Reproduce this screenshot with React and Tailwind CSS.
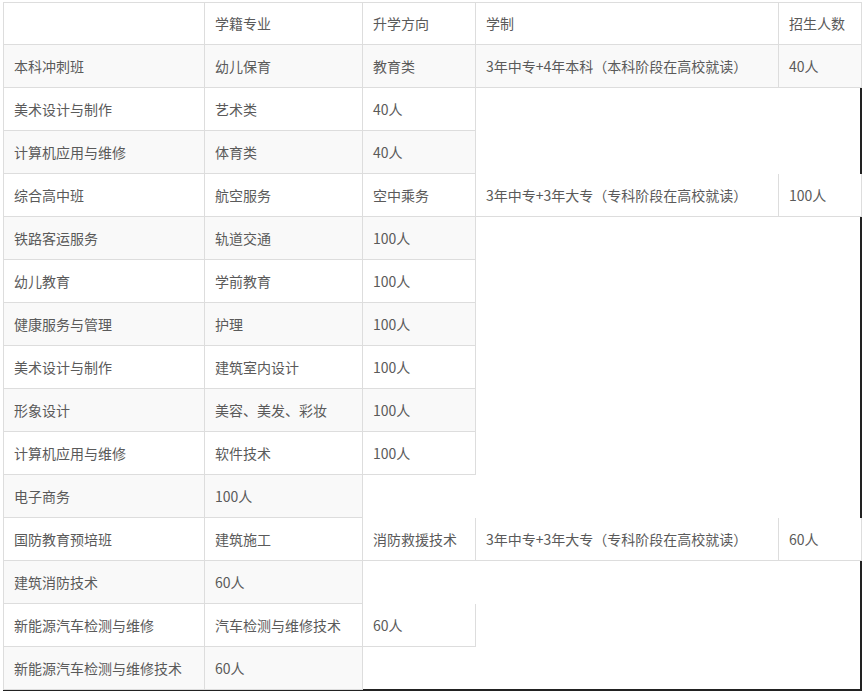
const rows = [
  ["", "学籍专业", "升学方向", "学制", "招生人数"],
  ["本科冲刺班", "幼儿保育", "教育类", "3年中专+4年本科（本科阶段在高校就读）", "40人"],
  ["美术设计与制作", "艺术类", "40人"],
  ["计算机应用与维修", "体育类", "40人"],
  ["综合高中班", "航空服务", "空中乘务", "3年中专+3年大专（专科阶段在高校就读）", "100人"],
  ["铁路客运服务", "轨道交通", "100人"],
  ["幼儿教育", "学前教育", "100人"],
  ["健康服务与管理", "护理", "100人"],
  ["美术设计与制作", "建筑室内设计", "100人"],
  ["形象设计", "美容、美发、彩妆", "100人"],
  ["计算机应用与维修", "软件技术", "100人"],
  ["电子商务", "100人"],
  ["国防教育预培班", "建筑施工", "消防救援技术", "3年中专+3年大专（专科阶段在高校就读）", "60人"],
  ["建筑消防技术", "60人"],
  ["新能源汽车检测与维修", "汽车检测与维修技术", "60人"],
  ["新能源汽车检测与维修技术", "60人"],
];

export default function App() {
  return (
    <div className="bg-white w-[867px] h-[693px] pl-[3px] pt-[2px]" style={{ fontFamily: '"Noto Sans CJK SC", "Noto Sans", sans-serif' }}>
      <div className="w-[859px] h-[689px] border-r-2 border-b-2 border-[#222]">
        <div className="w-[859px] grid grid-cols-[202px_158px_113px_303px_83px] auto-rows-[43px] text-[14px] text-[#5a5a5a]">
          {rows.map((r, i) =>
            r.map((c, j) => (
              <div
                key={i + "-" + j}
                className={
                  "flex items-center px-[10px] whitespace-nowrap border-r border-b border-[#ddd] " +
                  (j === 0 ? "col-start-1 border-l " : "") +
                  (i === 0 ? "border-t " : "") +
                  (i % 2 === 1 ? "bg-[#f9f9f9]" : "bg-white")
                }
              >
                {c}
              </div>
            ))
          )}
        </div>
      </div>
    </div>
  );
}
